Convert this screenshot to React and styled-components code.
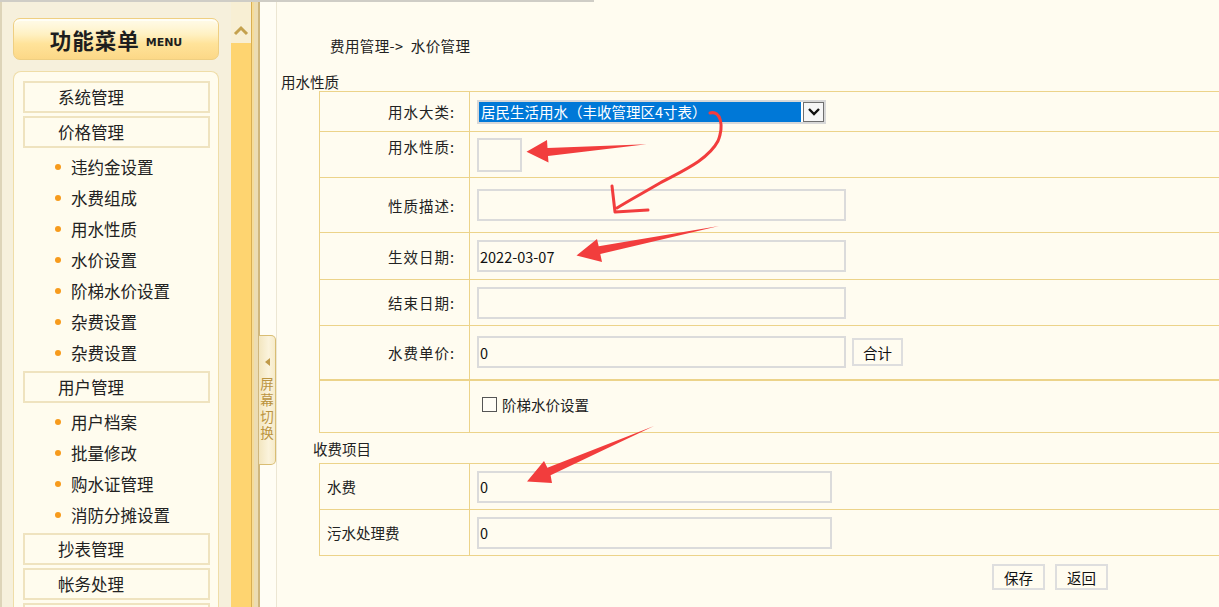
import React from 'react'
import styled, {createGlobalStyle} from 'styled-components'

const GlobalStyle = createGlobalStyle`
    html, body {
        margin: 0;
        padding: 0;
        background: #fffcf0;
    }
    body {
        font-family: "Noto Sans CJK SC", "Noto Sans", sans-serif;
        color: #222;
    }
`

const priceMenu = ['违约金设置', '水费组成', '用水性质', '水价设置', '阶梯水价设置', '杂费设置', '杂费设置']
const userMenu = ['用户档案', '批量修改', '购水证管理', '消防分摊设置']

const formRows = [
    {label: '用水大类:', h: 40, kind: 'select'},
    {label: '用水性质:', h: 46, kind: 'small', lift: true},
    {label: '性质描述:', h: 55, kind: 'input', value: ''},
    {label: '生效日期:', h: 47, kind: 'input', value: '2022-03-07'},
    {label: '结束日期:', h: 46, kind: 'input', value: ''},
    {label: '水费单价:', h: 54, kind: 'sum', value: '0'},
    {label: '', h: 53, kind: 'check'},
]

const feeRows = [
    {label: '水费', value: '0'},
    {label: '污水处理费', value: '0'},
]

const App = () => {
    return (
        <Page>
            <GlobalStyle />
            <TopRule />
            <Body>
                <Sidebar>
                    <MenuHead>
                        <span className="cn">功能菜单</span>
                        <span className="en">MENU</span>
                    </MenuHead>
                    <MenuPanel>
                        <GroupHead>系统管理</GroupHead>
                        <GroupHead>价格管理</GroupHead>
                        <SubList>
                            {priceMenu.map((m, i) => <SubItem key={i}>{m}</SubItem>)}
                        </SubList>
                        <GroupHead>用户管理</GroupHead>
                        <SubList>
                            {userMenu.map((m, i) => <SubItem key={i}>{m}</SubItem>)}
                        </SubList>
                        <GroupHead>抄表管理</GroupHead>
                        <GroupHead>帐务处理</GroupHead>
                        <GroupHead />
                    </MenuPanel>
                </Sidebar>

                <ScrollBar>
                    <ScrollUp>
                        <svg width="16" height="11" viewBox="0 0 16 11">
                            <polyline points="2,9 8,3 14,9" fill="none" stroke="#c4a14e" strokeWidth="3" />
                        </svg>
                    </ScrollUp>
                    <ScrollTrack />
                </ScrollBar>

                <Splitter>
                    <SwitchTab>
                        <span className="tri" />
                        <span className="txt">屏幕切换</span>
                    </SwitchTab>
                </Splitter>

                <Content>
                    <Crumb>费用管理-&gt;&nbsp;&nbsp;水价管理</Crumb>
                    <Legend $indent={4}>用水性质</Legend>
                    <FormTable>
                        <tbody>
                            {formRows.map((r, i) => (
                                <Row key={i} $h={r.h} $thick={r.kind === 'check'}>
                                    <LabelCell $lift={r.lift}>{r.label}</LabelCell>
                                    <ValueCell>
                                        {r.kind === 'select' && (
                                            <FakeSelect>
                                                <span className="picked">居民生活用水（丰收管理区4寸表）</span>
                                                <span className="drop">
                                                    <svg width="14" height="9" viewBox="0 0 14 9">
                                                        <polyline points="2,2 7,7 12,2" fill="none" stroke="#111" strokeWidth="2.4" />
                                                    </svg>
                                                </span>
                                            </FakeSelect>
                                        )}
                                        {r.kind === 'small' && <TextBox $w={45} $h={34} readOnly value="" />}
                                        {r.kind === 'input' && <TextBox $w={369} readOnly value={r.value} />}
                                        {r.kind === 'sum' && (
                                            <>
                                                <TextBox $w={369} readOnly value={r.value} />
                                                <Btn $ml={6} $w={51} $h={28}>合计</Btn>
                                            </>
                                        )}
                                        {r.kind === 'check' && (
                                            <CheckLine>
                                                <span className="box" />
                                                阶梯水价设置
                                            </CheckLine>
                                        )}
                                    </ValueCell>
                                </Row>
                            ))}
                        </tbody>
                    </FormTable>

                    <Legend $indent={36} $top={7}>收费项目</Legend>
                    <FormTable $top={5}>
                        <tbody>
                            {feeRows.map((r, i) => (
                                <Row key={i} $h={46}>
                                    <LabelCell $left>{r.label}</LabelCell>
                                    <ValueCell>
                                        <TextBox $w={355} readOnly value={r.value} />
                                    </ValueCell>
                                </Row>
                            ))}
                        </tbody>
                    </FormTable>

                    <Actions>
                        <Btn $w={53} $h={26}>保存</Btn>
                        <Btn $w={53} $h={26}>返回</Btn>
                    </Actions>
                </Content>
            </Body>

            {/* red annotation arrows drawn over the screenshot */}
            <Marks viewBox="0 0 1219 607">
                <g fill="#f23d3d">
                    <polygon points="526.5,151.7 547,140 547.5,148 646.5,144.3 548,156 548.5,162.5" />
                    <polygon points="576.5,255.5 597,239 598.7,246.3 719,226 600.3,254.1 602,262" />
                    <polygon points="527,481.5 544,461 547.4,467.8 654,426 550.6,475.2 552,483" />
                </g>
                <g fill="none" stroke="#f23d3d" strokeWidth="3" strokeLinecap="round" strokeLinejoin="round">
                    <path d="M710,113 C721,110 724,126 718,141 C708,160 682,171 660,183 C643,193 628,201 617,208" />
                    <path d="M612,186 L615,212 L648,210" />
                </g>
            </Marks>
        </Page>
    )
}

export default App;

const Page = styled.div`
    position: relative;
    width: 1219px;
    height: 607px;
    overflow: hidden;
    display: flex;
    flex-direction: column;
    background: #fffcf0;
`

const TopRule = styled.div`
    width: 594px;
    height: 2px;
    flex: none;
    background: #cfcdc6;
`

const Body = styled.div`
    flex: 1;
    display: flex;
    min-height: 0;
`

const Sidebar = styled.div`
    width: 231px;
    flex: none;
    box-sizing: border-box;
    padding: 16px 12px 0 11px;
    background: #f6f0dc;
    border-left: 2px solid #ddd4b8;
    display: flex;
    flex-direction: column;
`

const MenuHead = styled.div`
    flex: none;
    height: 42px;
    box-sizing: border-box;
    border: 1px solid #efcf82;
    border-radius: 7px;
    background: linear-gradient(#fffbea 0%, #fff6d6 22%, #fff0c0 40%, #ffe39a 62%, #fcd887 100%);
    box-shadow: inset 0 2px 0 #fffef6;
    display: flex;
    align-items: center;
    justify-content: center;
    gap: 6px;
    color: #1e1e1e;
    .cn {
        font-size: 21.5px;
        font-weight: 700;
        letter-spacing: 1px;
    }
    .en {
        font-family: "DejaVu Sans", sans-serif;
        font-size: 11px;
        font-weight: 700;
        margin-top: 6px;
    }
`

const MenuPanel = styled.div`
    flex: 1;
    min-height: 0;
    overflow: hidden;
    margin-top: 11px;
    box-sizing: border-box;
    padding: 9px 8px 0 9px;
    border: 1px solid #efdda8;
    border-bottom: none;
    border-radius: 8px 8px 0 0;
    background: #fffcee;
`

const GroupHead = styled.div`
    height: 32px;
    box-sizing: border-box;
    margin-bottom: 3px;
    padding-left: 33px;
    border: 2px solid #efe3bf;
    font-size: 16.5px;
    line-height: 28px;
    color: #222;
`

const SubList = styled.div`
    margin-bottom: 3px;
`

const SubItem = styled.div`
    height: 31px;
    display: flex;
    align-items: center;
    padding-left: 32px;
    font-size: 16.5px;
    color: #222;
    &::before {
        content: '';
        width: 6px;
        height: 6px;
        border-radius: 50%;
        background: #f79b1c;
        margin-right: 10px;
    }
`

const ScrollBar = styled.div`
    width: 20px;
    flex: none;
    display: flex;
    flex-direction: column;
`

const ScrollUp = styled.div`
    height: 41px;
    background: #f8efd4;
    display: flex;
    justify-content: center;
    padding-top: 23px;
    box-sizing: border-box;
`

const ScrollTrack = styled.div`
    flex: 1;
    background: #fed470;
`

const Splitter = styled.div`
    width: 26px;
    flex: none;
    background: linear-gradient(to right,
        #d8ae52 0 1px,
        #f6dc98 1px 3px,
        #ecdcb2 3px 7px,
        #cfb67c 7px 9px,
        #fffdf4 9px 25px,
        #ece6d3 25px 26px);
`

const SwitchTab = styled.div`
    margin: 333px 0 0 8px;
    width: 17px;
    height: 130px;
    box-sizing: border-box;
    border: 1px solid #d9bd73;
    border-left: none;
    border-radius: 0 5px 5px 0;
    background: linear-gradient(to right, #f3e6c0, #fbf3dc 60%, #f6ebc9);
    display: flex;
    flex-direction: column;
    align-items: center;
    padding-top: 22px;
    .tri {
        width: 0;
        height: 0;
        border-top: 4px solid transparent;
        border-bottom: 4px solid transparent;
        border-right: 5px solid #c09a4a;
        margin-bottom: 11px;
    }
    .txt {
        writing-mode: vertical-rl;
        text-orientation: upright;
        font-size: 13.5px;
        line-height: 14px;
        letter-spacing: 3px;
        color: #bb9440;
    }
`

const Content = styled.div`
    flex: 1;
    min-width: 0;
    overflow: hidden;
    background: #fffcf0;
    font-size: 14.5px;
    color: #222;
`

const Crumb = styled.div`
    margin: 35px 0 0 53px;
    line-height: 18px;
    font-size: 14.5px;
    letter-spacing: 0.4px;
`

const Legend = styled.div`
    margin: ${p => p.$top ?? 18}px 0 0 ${p => p.$indent}px;
    line-height: 18px;
`

const FormTable = styled.table`
    margin: ${p => p.$top ?? 0}px 0 0 42px;
    width: 920px;
    border-collapse: collapse;
    table-layout: fixed;
    td {
        border: 1px solid #ecd38a;
        padding: 0;
    }
`

const Row = styled.tr`
    height: ${p => p.$h}px;
    ${p => p.$thick && 'td { border-top: 2px solid #ecd38a; }'}
`

const LabelCell = styled.td`
    width: 150px;
    box-sizing: border-box;
    text-align: ${p => (p.$left ? 'left' : 'right')};
    padding: ${p => (p.$left ? '0 0 1px 7px' : '0 14px 0 0')} !important;
    ${p => p.$lift && 'padding-bottom: 17px !important;'}
    vertical-align: middle;
    letter-spacing: ${p => (p.$left ? '0' : '1px')};
`

const ValueCell = styled.td`
    padding-left: 7px !important;
    vertical-align: middle;
    white-space: nowrap;
`

const FakeSelect = styled.div`
    width: 349px;
    height: 24px;
    box-sizing: border-box;
    border: 2px solid #d8d8d8;
    background: #fff;
    display: flex;
    align-items: stretch;
    .picked {
        width: 322px;
        background: #0078d7;
        color: #fff;
        line-height: 20px;
        padding-left: 2px;
        box-sizing: border-box;
    }
    .drop {
        margin-left: 2px;
        width: 21px;
        box-sizing: border-box;
        border: 1px solid #6f6f6f;
        background: #f6f6f6;
        display: flex;
        align-items: center;
        justify-content: center;
    }
`

const TextBox = styled.input`
    width: ${p => p.$w}px;
    height: ${p => p.$h ?? 32}px;
    box-sizing: border-box;
    border: 2px solid #dbdbdb;
    background: #fffcf0;
    font-family: inherit;
    font-size: 14.5px;
    color: #111;
    padding: 0 1px;
    vertical-align: middle;
    outline: none;
`

const Btn = styled.button`
    width: ${p => p.$w}px;
    height: ${p => p.$h}px;
    margin-left: ${p => p.$ml ?? 0}px;
    box-sizing: border-box;
    border: 2px solid #dedede;
    background: #fffcf0;
    font-family: inherit;
    font-size: 14.5px;
    color: #111;
    padding: 0;
    vertical-align: middle;
`

const CheckLine = styled.label`
    display: flex;
    align-items: center;
    margin: 0 0 3px 5px;
    gap: 5px;
    .box {
        width: 15px;
        height: 15px;
        box-sizing: border-box;
        border: 1px solid #555;
        background: #fffdf6;
    }
`

const Actions = styled.div`
    display: flex;
    gap: 10px;
    margin: 8px 0 0 715px;
`

const Marks = styled.svg`
    position: absolute;
    left: 0;
    top: 0;
    width: 1219px;
    height: 607px;
    pointer-events: none;
`
